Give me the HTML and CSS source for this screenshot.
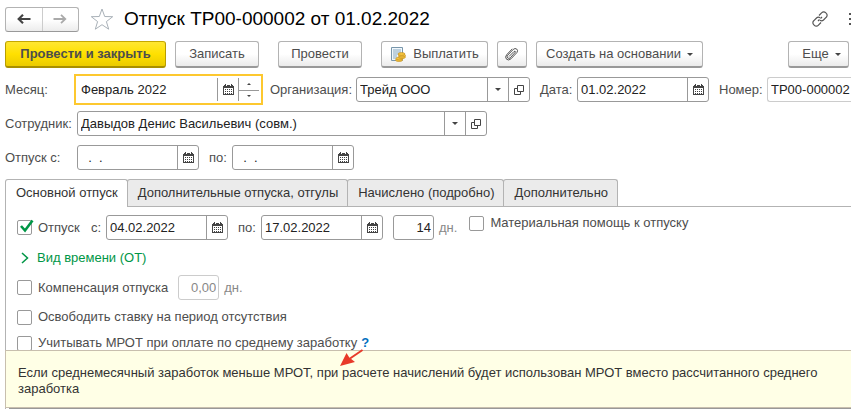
FILE: index.html
```html
<!DOCTYPE html>
<html lang="ru">
<head>
<meta charset="utf-8">
<title>Отпуск ТР00-000002 от 01.02.2022</title>
<link rel="stylesheet" href="styles.css">
</head>
<body>
<svg class="sprite" aria-hidden="true">
  <symbol id="calendar" viewBox="0 0 11 11">
    <path d="M1 1h9v1h1v9H0V2h1z" fill="#444"/>
    <path d="M1 4h9v6H1z" fill="#fff"/>
    <path d="M2 0h1v2H2zM8 0h1v2H8z" fill="#444"/>
    <path d="M3 1h1v1H3zM7 1h1v1H7z" fill="#fff"/>
    <path d="M2 5h1v1H2zM4 5h1v1H4zM6 5h1v1H6zM8 5h1v1H8zM2 7h1v1H2zM4 7h1v1H4zM6 7h1v1H6zM8 7h1v1H8zM2 9h1v1H2zM4 9h1v1H4zM6 9h1v1H6zM8 9h1v1H8z" fill="#444"/>
  </symbol>
  <symbol id="open" viewBox="0 0 10 10">
    <path d="M3.500.5h6v6h-6zM3.500 3.500h-3v6h6v-3" fill="none" stroke="#444"/>
  </symbol>
  <symbol id="caret" viewBox="0 0 6 3">
    <path d="M0 0h6L3 3z" fill="#444"/>
  </symbol>
</svg>

<header class="titlebar">
  <div class="nav">
    <button type="button" aria-label="Назад"><svg width="14" height="10" viewBox="0 0 14 10"><path d="M13.500 5H2M6 .8L1.700 5 6 9.200" fill="none" stroke="#444" stroke-width="2.200"/></svg></button>
    <button type="button" aria-label="Вперед"><svg width="14" height="10" viewBox="0 0 14 10"><path d="M.5 5H12M8 .8L12.300 5 8 9.200" fill="none" stroke="#aaa" stroke-width="1.800"/></svg></button>
  </div>
  <button type="button" class="plain" aria-label="Избранное"><svg width="24" height="22" viewBox="0 0 24 22"><path d="M12 1l2.700 7.500 8 .2-6.300 4.900 2.300 7.600L12 16.700l-6.700 4.500 2.300-7.600L1.300 8.700l8-.2z" fill="none" stroke="#a9b1b8"/></svg></button>
  <h1>Отпуск ТР00-000002 от 01.02.2022</h1>
  <div class="title-tools">
    <button type="button" class="plain" aria-label="Ссылка"><svg width="16" height="16" viewBox="0 0 16 16"><g fill="none" stroke="#555" stroke-width="1.200"><path d="M7 4.500l2.800-2.800a2.600 2.600 0 0 1 3.800 0l.7.7a2.600 2.600 0 0 1 0 3.800L11.500 9q-1.700 1.500-3.500.2M9 11.500l-2.800 2.800a2.600 2.600 0 0 1-3.800 0l-.7-.7a2.600 2.600 0 0 1 0-3.800L4.500 7Q6.200 5.500 8 6.800M6 10l1.500-1.500M8.500 7.500L10 6"/></g></svg></button>
    <button type="button" class="plain" aria-label="Меню"><svg width="2" height="12" viewBox="0 0 2 12"><path d="M0 0h2v2H0zM0 5h2v2H0zM0 10h2v2H0z" fill="#555"/></svg></button>
  </div>
</header>

<div class="toolbar">
  <button type="button" class="btn primary">Провести и закрыть</button>
  <button type="button" class="btn">Записать</button>
  <button type="button" class="btn apart">Провести</button>
  <button type="button" class="btn apart pay"><svg width="16" height="16" viewBox="0 0 16 16"><path d="M1.500 1.500h11v13h-11z" fill="#f2f8fc" stroke="#7896ab"/><path d="M3 4h8M3 6h8M3 8h7M3 10h4M3 12h4" stroke="#86a9c2"/><g fill="#f3c33e" stroke="#c08a1e" stroke-width=".6"><ellipse cx="9" cy="14" rx="3.500" ry="1.500"/><ellipse cx="9.500" cy="12.500" rx="3.500" ry="1.500"/><ellipse cx="12" cy="11" rx="3.500" ry="1.500"/><ellipse cx="12" cy="9.500" rx="3.500" ry="1.500"/><ellipse cx="11.500" cy="8" rx="3.500" ry="1.500"/></g></svg>Выплатить</button>
  <button type="button" class="btn icon" aria-label="Файлы"><svg width="14" height="14" viewBox="0 0 14 14"><path d="M4 9.500l5-5q1.300-.8 1.600.4L5.300 10.800q-1.500 1.200-2.700.1-1-1.300.1-2.700l5.500-5.700Q10 .8 11.700 2q1.700 1.600.2 3.600L6 11.800q-2.500 2.200-4.500.4-1.900-2.200.2-4.500L7.300 1.800" fill="none" stroke="#555"/></svg></button>
  <button type="button" class="btn create">Создать на основании<svg width="6" height="3"><use href="#caret"/></svg></button>
  <button type="button" class="btn more">Еще<svg width="6" height="3"><use href="#caret"/></svg></button>
</div>

<main>
  <div class="row">
    <label class="lead" for="month">Месяц:</label>
    <div class="field month"><input id="month" value="Февраль 2022"><button type="button" aria-label="Выбрать месяц"><svg width="11" height="11"><use href="#calendar"/></svg></button>
      <div class="spin"><button type="button" aria-label="Больше"><svg width="4" height="2"><path d="M0 2h4L2 0z" fill="#444"/></svg></button><button type="button" aria-label="Меньше"><svg width="4" height="2"><path d="M0 0h4L2 2z" fill="#444"/></svg></button></div></div>
    <label class="org-label" for="org">Организация:</label>
    <div class="field org"><input id="org" value="Трейд ООО"><button type="button" aria-label="Список"><svg width="6" height="3"><use href="#caret"/></svg></button><button type="button" aria-label="Открыть"><svg width="10" height="10"><use href="#open"/></svg></button></div>
    <label class="date-label" for="date">Дата:</label>
    <div class="field date wide"><input id="date" value="01.02.2022"><button type="button" aria-label="Выбрать дату"><svg width="11" height="11"><use href="#calendar"/></svg></button></div>
    <label class="num-label" for="num">Номер:</label>
    <div class="field num"><input id="num" value="ТР00-000002"></div>
  </div>

  <div class="row">
    <label class="lead" for="person">Сотрудник:</label>
    <div class="field person"><input id="person" value="Давыдов Денис Васильевич (совм.)"><button type="button" aria-label="Список"><svg width="6" height="3"><use href="#caret"/></svg></button><button type="button" aria-label="Открыть"><svg width="10" height="10"><use href="#open"/></svg></button></div>
  </div>

  <div class="row">
    <label class="lead" for="from">Отпуск с:</label>
    <div class="field date"><input id="from" value="  .  ."><button type="button" aria-label="Выбрать дату"><svg width="11" height="11"><use href="#calendar"/></svg></button></div>
    <label class="to-label" for="to">по:</label>
    <div class="field date"><input id="to" value="  .  ."><button type="button" aria-label="Выбрать дату"><svg width="11" height="11"><use href="#calendar"/></svg></button></div>
  </div>

  <div class="tabs" role="tablist">
    <button type="button" role="tab" aria-selected="true">Основной отпуск</button>
    <button type="button" role="tab" aria-selected="false">Дополнительные отпуска, отгулы</button>
    <button type="button" role="tab" aria-selected="false">Начислено (подробно)</button>
    <button type="button" role="tab" aria-selected="false">Дополнительно</button>
  </div>

  <section class="panel">
    <div class="line main-line">
      <label class="check vac"><span class="box"><input type="checkbox" checked><svg class="tick" width="15" height="14" viewBox="0 0 15 14"><path d="M2 7l4 4.500L13.500 1.500" fill="none" stroke="#009646" stroke-width="2.600"/></svg></span>Отпуск</label>
      <label class="s-label" for="vfrom">с:</label>
      <div class="field date"><input id="vfrom" value="04.02.2022"><button type="button" aria-label="Выбрать дату"><svg width="11" height="11"><use href="#calendar"/></svg></button></div>
      <label class="to-label" for="vto">по:</label>
      <div class="field date"><input id="vto" value="17.02.2022"><button type="button" aria-label="Выбрать дату"><svg width="11" height="11"><use href="#calendar"/></svg></button></div>
      <div class="field days"><input id="days" value="14"></div>
      <label class="unit" for="days">дн.</label>
      <label class="check aid"><span class="box"><input type="checkbox"></span>Материальная помощь к отпуску</label>
    </div>
    <button type="button" class="group"><svg width="8" height="12" viewBox="0 0 8 12"><path d="M1 1l5.500 5L1 11" fill="none" stroke="#009646" stroke-width="1.500"/></svg>Вид времени (ОТ)</button>
    <div class="line">
      <label class="check"><span class="box"><input type="checkbox"></span>Компенсация отпуска</label>
      <div class="field days muted"><input id="comp" value="0,00" disabled></div>
      <label class="unit" for="comp">дн.</label>
    </div>
    <div class="line rate-line">
      <label class="check"><span class="box"><input type="checkbox"></span>Освободить ставку на период отсутствия</label>
    </div>
    <div class="line min-line">
      <label class="check"><span class="box"><input type="checkbox"></span>Учитывать МРОТ при оплате по среднему заработку</label>
      <a class="help" href="#hint">?</a>
    </div>
    <div class="list"></div>
    <div class="hint" id="hint" role="tooltip">Если среднемесячный заработок меньше МРОТ, при расчете начислений будет использован МРОТ вместо рассчитанного среднего заработка
      <svg class="arrow" width="24" height="18" viewBox="0 0 24 18"><path d="M22.500 1L10 9.500" stroke="#e83a2a" stroke-width="2"/><path d="M0 17L6.500 4l2.800 4.500L15 13z" fill="#e83a2a"/></svg>
    </div>
  </section>
</main>
</body>
</html>
```
FILE: styles.css
```css
* { box-sizing: border-box; }
body {
  margin: 0;
  padding: 7px 0 0 5px;
  overflow: hidden;
  background: #fff;
  color: #4d4d4d;
  font: 13px/16px "Liberation Sans", Arial, sans-serif;
}
button, input { font: inherit; color: inherit; margin: 0; padding: 0; }
button { border: 0; background: none; }
svg { display: block; flex: none; }
.sprite { position: absolute; width: 0; height: 0; }

.titlebar { display: flex; align-items: center; height: 24px; }
.nav {
  display: flex;
  width: 74px;
  height: 25px;
  border: 1px solid #b3b3b3;
  border-bottom-color: #999;
  border-radius: 3px;
  background: linear-gradient(#fff 50%, #ececec);
}
.nav button { flex: 1; display: grid; place-items: center; }
.nav button + button { border-left: 1px solid #ccc; }
.titlebar > .plain { margin: 0 10px 0 11px; }
h1 { margin: 0; font-size: 19px; line-height: 24px; font-weight: 400; color: #000; white-space: nowrap; }
.title-tools { display: flex; align-items: center; gap: 21px; margin-left: auto; }

.toolbar { display: flex; gap: 9px; margin-top: 10px; padding-right: 2px; }
.btn {
  display: flex;
  align-items: center;
  justify-content: center;
  min-width: 84px;
  height: 27px;
  border: 1px solid #b3b3b3;
  border-bottom: 2px solid #999;
  border-radius: 3px;
  background: linear-gradient(#fff 50%, #ebebeb);
  white-space: nowrap;
}
.primary {
  width: 161px;
  border-color: #c5a800 #b89d00 #a88f00;
  background: linear-gradient(#ffe732, #ffe000 50%, #ebcb00);
  font-weight: 700;
}
.apart { margin-left: 10px; }
.pay { width: 107px; gap: 7px; }
.icon { min-width: 30px; }
.create { width: 167px; gap: 6px; }
.more { min-width: 61px; margin-left: auto; gap: 6px; padding-left: 6px; }

.row { display: flex; align-items: center; margin-top: 9px; white-space: nowrap; }
.row > label, .line > label { flex: none; }
.row > .field + label { margin-left: 10px; }
.lead { width: 72px; }
.org-label { width: 86px; }
.date-label { width: 37px; }
.num-label { width: 48px; }
.to-label { width: 23px; }

.field {
  display: flex;
  flex: none;
  height: 25px;
  border: 1px solid #999;
  border-radius: 3px;
  background: #fff;
  color: #222;
}
.field input { flex: 1; width: 100%; min-width: 0; padding: 0 4px 0 3px; border: 0; outline: 0; background: none; }
.field > button { flex: none; display: grid; place-items: center; width: 21px; border-left: 1px solid #999; }
.date { width: 122px; }
.wide { width: 132px; }
.org { width: 174px; }
.person { width: 410px; }
.num { flex: 1; min-width: 0; border-color: #ccc; border-right: 0; border-radius: 3px 0 0 3px; }
.num input { padding-right: 0; }
.month { width: 183px; border-color: #fff; outline: 2px solid #fdc82f; outline-offset: 1px; border-radius: 0; }
.spin { display: grid; grid-template-rows: 1fr 1fr; width: 21px; border-left: 1px solid #999; }
.spin button { display: grid; place-items: center; }
.spin button + button { border-top: 1px solid #999; }

.tabs { display: flex; margin-top: 9px; border-bottom: 1px solid #b3b3b3; }
.tabs button {
  height: 27px;
  margin-right: -1px;
  padding: 0 9px 0 10px;
  border: 1px solid #b3b3b3;
  border-bottom: 0;
  border-radius: 3px 3px 0 0;
  background: #ebebeb;
  color: #333;
  white-space: nowrap;
}
.tabs [aria-selected="true"] { height: 28px; margin-bottom: -1px; padding-bottom: 1px; background: #fff; }

.panel { position: relative; padding: 8px 0 0 11px; border-left: 1px solid #b3b3b3; }
.line { display: flex; align-items: center; white-space: nowrap; }
.check { display: flex; align-items: center; gap: 6px; }
.box { position: relative; }
.box input { display: block; appearance: none; width: 15px; height: 15px; border: 1px solid #999; border-radius: 2px; background: #fff; }
.tick { position: absolute; left: 2px; top: -1px; }
.vac { width: 74px; }
.s-label { width: 15px; }
.line .to-label { margin-left: 10px; }
.days { width: 41px; margin-left: 10px; }
.days input { text-align: right; padding: 0 2px; }
.unit { margin-left: 5px; color: #888; }
.muted { border-color: #ccc; color: #888; }
.aid { align-self: flex-start; margin-left: 12px; }
.group { display: flex; align-items: center; gap: 8px; margin: 10px 0 0 4px; color: #009646; }
.group + .line { margin-top: 9px; }
.rate-line { margin-top: 9px; }
.min-line { margin-top: 10px; }
.help { margin-left: 4px; color: #0070c0; font-weight: 700; text-decoration: none; }
.list { height: 20px; margin: 56px 0 0 -8px; border-top: 2px solid #999; }
.hint {
  position: absolute;
  left: -1px;
  right: 0;
  top: 143px;
  padding: 14px 20px 10px 12px;
  border: 1px solid #c8bfae;
  border-right: 0;
  background: #ffffe6;
  color: #333;
}
.arrow { position: absolute; left: 334px; top: -2px; }
```
